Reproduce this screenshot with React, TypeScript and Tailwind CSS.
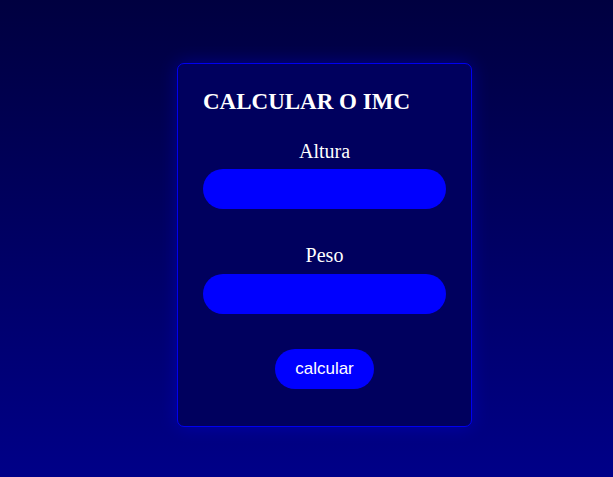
export default function App() {
  return (
    <div className="min-h-screen bg-linear-to-b from-[#000040] to-[#000088] pt-[63px] pl-[177px]">
      {/* Card */}
      <div className="w-[295px] h-[364px] rounded-[7px] border border-[#0000f0] bg-[#00005e] px-[25px] pt-[24px] shadow-[0_0_18px_rgba(0,0,255,0.35)]">
        <h2 className="font-['Liberation_Serif',serif] text-[23px] leading-[28px] font-bold text-white">
          CALCULAR O IMC
        </h2>

        <label className="mt-[24px] block text-center font-['Liberation_Serif',serif] text-[20px] leading-[23px] text-white">
          Altura
        </label>
        <input className="mt-[6px] block h-[40px] w-full rounded-full bg-[#0000ff] outline-none" />

        <label className="mt-[35px] block text-center font-['Liberation_Serif',serif] text-[20px] leading-[23px] text-white">
          Peso
        </label>
        <input className="mt-[7px] block h-[40px] w-full rounded-full bg-[#0000ff] outline-none" />

        <div className="mt-[35px] flex justify-center">
          <button className="h-[40px] rounded-full bg-[#0000ff] px-[20px] font-['Liberation_Sans',sans-serif] text-[17px] text-white">
            calcular
          </button>
        </div>
      </div>
    </div>
  );
}
